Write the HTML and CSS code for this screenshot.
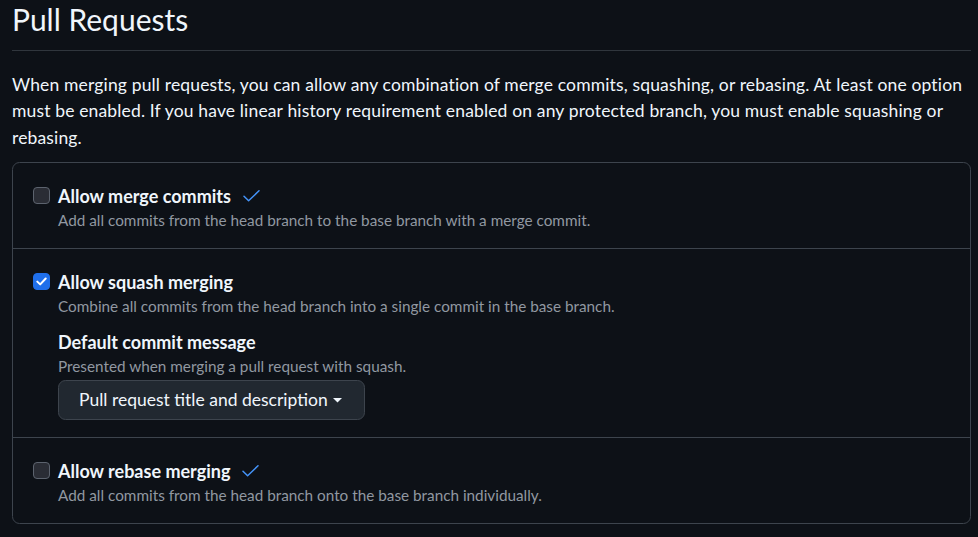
FILE: index.html
```html
<!DOCTYPE html>
<html lang="en">
<head>
<meta charset="utf-8">
<title>Pull Requests</title>
<link rel="stylesheet" href="styles.css">
</head>
<body>
<div class="page">
  <h2 class="subhead">Pull Requests</h2>
  <p class="lead">When merging pull requests, you can allow any combination of merge commits, squashing, or rebasing. At least one option must be enabled. If you have linear history requirement enabled on any protected branch, you must enable squashing or rebasing.</p>
  <div class="box">
    <div class="row">
      <span class="cb"></span>
      <div class="body">
        <div class="title">Allow merge commits
          <svg class="ok" width="17" height="12" viewBox="0 0 17 12"><path d="M1 6.2 L5.6 10.8 L16 0.8" fill="none" stroke="#4493f8" stroke-width="1.5" stroke-linecap="round" stroke-linejoin="round"/></svg>
        </div>
        <div class="note">Add all commits from the head branch to the base branch with a merge commit.</div>
      </div>
    </div>
    <div class="row">
      <span class="cb checked"><svg width="11" height="9" viewBox="0 0 11 9"><path d="M1.3 4.6 L4.2 7.4 L9.7 1.5" fill="none" stroke="#ffffff" stroke-width="2" stroke-linecap="round" stroke-linejoin="round"/></svg></span>
      <div class="body">
        <div class="title">Allow squash merging</div>
        <div class="note">Combine all commits from the head branch into a single commit in the base branch.</div>
        <div class="title sub">Default commit message</div>
        <div class="note">Presented when merging a pull request with squash.</div>
        <button class="btn" type="button">Pull request title and description
          <svg class="caret" width="9" height="5" viewBox="0 0 9 5"><path d="M0 0 H9 L4.5 4.6 Z" fill="#f0f6fc"/></svg>
        </button>
      </div>
    </div>
    <div class="row">
      <span class="cb"></span>
      <div class="body">
        <div class="title">Allow rebase merging
          <svg class="ok" width="17" height="12" viewBox="0 0 17 12"><path d="M1 6.2 L5.6 10.8 L16 0.8" fill="none" stroke="#4493f8" stroke-width="1.5" stroke-linecap="round" stroke-linejoin="round"/></svg>
        </div>
        <div class="note">Add all commits from the head branch onto the base branch individually.</div>
      </div>
    </div>
  </div>
</div>
</body>
</html>
```

FILE: styles.css
```css
* { box-sizing: border-box; }
html, body { margin: 0; background: #0d1117; }
body {
  font-family: Lato, "Noto Sans", "Liberation Sans", sans-serif;
  color: #f0f6fc;
}
.page { width: 959px; margin-left: 12px; }
.subhead {
  margin: 0;
  font-size: 30px;
  font-weight: 400;
  line-height: 38px;
  padding-bottom: 12px;
  border-bottom: 1px solid #30363d;
}
.lead {
  margin: 21px 0 11px;
  font-size: 17.5px;
  line-height: 26.25px;
  letter-spacing: 0.15px;
}
.box {
  border: 1px solid #3d444d;
  border-radius: 7.5px;
}
.row {
  display: flex;
  gap: 8px;
  padding: 20px 20px 17px;
}
.row + .row { border-top: 1px solid #3d444d; }
.cb {
  flex: none;
  width: 17px;
  height: 17px;
  margin-top: 4px;
  border: 1px solid #5c636e;
  border-radius: 4px;
  background: #2a2d35;
  display: flex;
  align-items: center;
  justify-content: center;
}
.cb.checked { background: #1f6feb; border-color: #1f6feb; }
.body { display: flex; flex-direction: column; align-items: flex-start; }
.title {
  display: flex;
  align-items: center;
  gap: 12px;
  font-size: 18px;
  font-weight: 700;
  line-height: 26px;
}
.title.sub { margin-top: 12px; }
.note {
  font-size: 15.3px;
  line-height: 22px;
  color: #9198a1;
}
.btn {
  margin-top: 3px;
  height: 40px;
  padding: 0 22px 0 20px;
  display: inline-flex;
  align-items: center;
  gap: 5px;
  background: #212830;
  border: 1px solid #3d444d;
  border-radius: 7.5px;
  color: #f0f6fc;
  font-family: inherit;
  font-size: 17.5px;
}
.caret { margin-top: 2px; }
```
